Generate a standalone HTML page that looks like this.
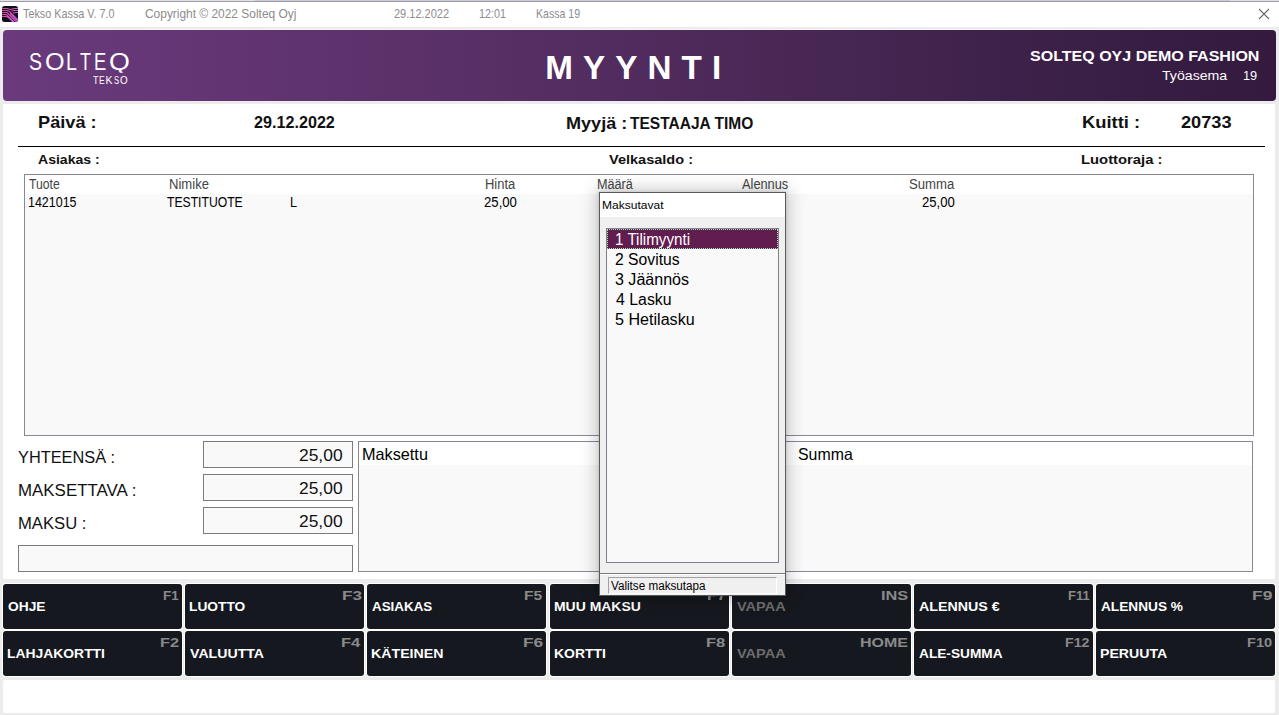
<!DOCTYPE html>
<html><head><meta charset="utf-8">
<style>
*{margin:0;padding:0;box-sizing:border-box}
html,body{width:1279px;height:715px;overflow:hidden}
body{position:relative;background:#ececec;font-family:"Liberation Sans", sans-serif}
.a{position:absolute}
.t{position:absolute;white-space:nowrap;line-height:1;transform-origin:0 0;font-family:"Liberation Sans", sans-serif}
.btn{position:absolute;background:#16181f;border-radius:3px}
.cell{position:absolute;background:#ffffff;border-radius:4px}
</style></head><body>
<!-- top strip -->
<div class="a" style="left:0;top:0;width:1279px;height:1px;background:#e2e2e2"></div><div class="a" style="left:255px;top:0;width:975px;height:1px;background:#c9ccd8"></div>
<div class="a" style="left:0;top:1px;width:1279px;height:1px;background:#9d9ea8"></div>
<!-- title bar -->
<div class="a" style="left:0;top:2px;width:1279px;height:25px;background:#ffffff"></div>
<svg class="a" style="left:2px;top:6px" width="16" height="16" viewBox="0 0 16 16">
 <defs><linearGradient id="ig" x1="0" x2="1" y1="0" y2="0"><stop offset="0" stop-color="#e2489c"/><stop offset="1" stop-color="#c95ae6"/></linearGradient>
 <clipPath id="ic"><rect x="0" y="0" width="16" height="16" rx="2.5"/></clipPath></defs>
 <g clip-path="url(#ic)">
 <rect x="0" y="0" width="16" height="16" fill="#111217"/>
 <g stroke="url(#ig)" stroke-width="1.1" fill="none">
  <path d="M0 2.5 H5 L8 3.5 L13 2.5 H16"/>
  <path d="M0 4.5 H5 L7.5 5.5 L16 14"/>
  <path d="M0 6.5 H5 L14.5 16"/>
  <path d="M0 8.5 H4.5 L12 16"/>
  <path d="M0 10.5 C3 10.5 5 10 6 11 L11 16"/>
  <path d="M9.5 5 L12 4.5 H16"/>
  <path d="M11 7 L13.5 6.5 H16"/>
  <path d="M8 7.5 L16 15.5"/>
 </g></g>
</svg>
<svg class="a" style="left:1258px;top:8px" width="12" height="12" viewBox="0 0 12 12"><path d="M1 1 L11 11 M11 1 L1 11" stroke="#6a6a6a" stroke-width="1.1"/></svg>
<!-- header -->
<div class="a" style="left:3px;top:29px;width:1273px;height:1px;background:#f6f6f6"></div>
<div class="a" style="left:3px;top:30px;width:1273px;height:71px;border-radius:4px;background:linear-gradient(90deg,#6a3a7c 0%,#5a3068 35%,#4a2856 60%,#3a1f46 85%,#331a3e 100%)"></div>
<!-- main white panel -->
<div class="a" style="left:3px;top:104px;width:1272px;height:475px;background:#ffffff;border-radius:1px"></div>
<div class="a" style="left:18px;top:146px;width:1247px;height:1px;background:#000"></div>
<!-- grid -->
<div class="a" style="left:24px;top:174px;width:1230px;height:262px;border:1px solid #858896;background:#f9f9f9"></div>
<div class="a" style="left:25px;top:175px;width:1228px;height:19px;background:#ffffff"></div>
<!-- totals boxes -->
<div class="a" style="left:203px;top:441px;width:150px;height:27px;border:1px solid #7c7c7c;background:#f9f9f9"></div>
<div class="a" style="left:203px;top:474px;width:150px;height:27px;border:1px solid #7c7c7c;background:#f9f9f9"></div>
<div class="a" style="left:203px;top:507px;width:150px;height:27px;border:1px solid #7c7c7c;background:#f9f9f9"></div>
<div class="a" style="left:18px;top:545px;width:335px;height:27px;border:1px solid #7c7c7c;background:#f9f9f9"></div>
<!-- maksettu panel -->
<div class="a" style="left:358px;top:441px;width:895px;height:131px;border:1px solid #858896;background:#f9f9f9"></div>
<div class="a" style="left:359px;top:442px;width:893px;height:23px;background:#ffffff"></div>
<!-- buttons -->
<div class="cell" style="left:2px;top:583px;width:181px;height:47px"></div>
<div class="cell" style="left:184px;top:583px;width:181px;height:47px"></div>
<div class="cell" style="left:366px;top:583px;width:181px;height:47px"></div>
<div class="cell" style="left:549px;top:583px;width:181px;height:47px"></div>
<div class="cell" style="left:731px;top:583px;width:181px;height:47px"></div>
<div class="cell" style="left:913px;top:583px;width:181px;height:47px"></div>
<div class="cell" style="left:1095px;top:583px;width:181px;height:47px"></div>
<div class="cell" style="left:2px;top:630px;width:181px;height:47px"></div>
<div class="cell" style="left:184px;top:630px;width:181px;height:47px"></div>
<div class="cell" style="left:366px;top:630px;width:181px;height:47px"></div>
<div class="cell" style="left:549px;top:630px;width:181px;height:47px"></div>
<div class="cell" style="left:731px;top:630px;width:181px;height:47px"></div>
<div class="cell" style="left:913px;top:630px;width:181px;height:47px"></div>
<div class="cell" style="left:1095px;top:630px;width:181px;height:47px"></div>
<div class="btn" style="left:3px;top:584px;width:179px;height:45px"></div>
<div class="btn" style="left:185px;top:584px;width:179px;height:45px"></div>
<div class="btn" style="left:367px;top:584px;width:179px;height:45px"></div>
<div class="btn" style="left:550px;top:584px;width:179px;height:45px"></div>
<div class="btn" style="left:732px;top:584px;width:179px;height:45px"></div>
<div class="btn" style="left:914px;top:584px;width:179px;height:45px"></div>
<div class="btn" style="left:1096px;top:584px;width:179px;height:45px"></div>
<div class="btn" style="left:3px;top:631px;width:179px;height:45px"></div>
<div class="btn" style="left:185px;top:631px;width:179px;height:45px"></div>
<div class="btn" style="left:367px;top:631px;width:179px;height:45px"></div>
<div class="btn" style="left:550px;top:631px;width:179px;height:45px"></div>
<div class="btn" style="left:732px;top:631px;width:179px;height:45px"></div>
<div class="btn" style="left:914px;top:631px;width:179px;height:45px"></div>
<div class="btn" style="left:1096px;top:631px;width:179px;height:45px"></div>
<!-- bottom panel -->
<div class="a" style="left:3px;top:680px;width:1272px;height:33px;background:#ffffff;border-radius:2px"></div>
<div class="t" style="left:23.10px;top:7.00px;font-size:13.00px;font-weight:400;color:#8c8c8c;transform:scaleX(0.8318);">Tekso Kassa V. 7.0</div>
<div class="t" style="left:144.66px;top:8.00px;font-size:12.75px;font-weight:400;color:#8c8c8c;transform:scaleX(0.9356);">Copyright © 2022 Solteq Oyj</div>
<div class="t" style="left:394.14px;top:8.00px;font-size:12.75px;font-weight:400;color:#8c8c8c;transform:scaleX(0.8629);">29.12.2022</div>
<div class="t" style="left:478.55px;top:8.00px;font-size:12.75px;font-weight:400;color:#8c8c8c;transform:scaleX(0.8467);">12:01</div>
<div class="t" style="left:535.87px;top:8.00px;font-size:12.75px;font-weight:400;color:#8c8c8c;transform:scaleX(0.8288);">Kassa 19</div>
<div class="t" style="left:29.21px;top:50.00px;font-size:24.75px;font-weight:400;color:#ffffff;transform:scaleX(0.7867);">S</div>
<div class="t" style="left:44.98px;top:50.00px;font-size:24.75px;font-weight:400;color:#ffffff;transform:scaleX(1.0176);">O</div>
<div class="t" style="left:66.22px;top:50.00px;font-size:24.75px;font-weight:400;color:#ffffff;transform:scaleX(0.7909);">L</div>
<div class="t" style="left:79.50px;top:50.00px;font-size:24.75px;font-weight:400;color:#ffffff;transform:scaleX(0.7200);">T</div>
<div class="t" style="left:94.31px;top:50.00px;font-size:24.75px;font-weight:400;color:#ffffff;transform:scaleX(0.7429);">E</div>
<div class="t" style="left:108.82px;top:50.00px;font-size:24.75px;font-weight:400;color:#ffffff;transform:scaleX(1.0824);clip-path:inset(0 0 2px 0)">Q</div>
<div class="t" style="left:93.10px;top:75.00px;font-size:10.50px;font-weight:400;color:#ffffff;transform:scaleX(0.8667);">T</div>
<div class="t" style="left:98.68px;top:75.00px;font-size:10.50px;font-weight:400;color:#ffffff;transform:scaleX(0.8167);">E</div>
<div class="t" style="left:105.40px;top:75.00px;font-size:10.50px;font-weight:400;color:#ffffff;transform:scaleX(1.0000);">K</div>
<div class="t" style="left:113.67px;top:75.00px;font-size:10.50px;font-weight:400;color:#ffffff;transform:scaleX(0.7333);">S</div>
<div class="t" style="left:119.70px;top:75.00px;font-size:10.50px;font-weight:400;color:#ffffff;transform:scaleX(0.9375);">O</div>
<div class="t" style="left:545.20px;top:51.00px;font-size:33.25px;font-weight:700;color:#ffffff;letter-spacing:10.080px">MYYNTI</div>
<div class="t" style="left:1029.96px;top:49.00px;font-size:14.00px;font-weight:700;color:#ffffff;transform:scaleX(1.1447);">SOLTEQ OYJ DEMO FASHION</div>
<div class="t" style="left:1161.90px;top:69.00px;font-size:13.25px;font-weight:400;color:#ffffff;transform:scaleX(1.0672);">Työasema</div>
<div class="t" style="left:1243.04px;top:69.00px;font-size:13.25px;font-weight:400;color:#ffffff;transform:scaleX(0.9615);">19</div>
<div class="t" style="left:37.55px;top:114.00px;font-size:17.25px;font-weight:700;color:#111111;transform:scaleX(1.0547);">Päivä :</div>
<div class="t" style="left:254.46px;top:114.00px;font-size:17.25px;font-weight:700;color:#111111;transform:scaleX(0.9365);">29.12.2022</div>
<div class="t" style="left:565.94px;top:115.00px;font-size:17.00px;font-weight:700;color:#111111;transform:scaleX(1.0636);">Myyjä :</div>
<div class="t" style="left:630.00px;top:115.00px;font-size:17.00px;font-weight:700;color:#111111;transform:scaleX(0.9127);">TESTAAJA TIMO</div>
<div class="t" style="left:1081.54px;top:114.00px;font-size:17.25px;font-weight:700;color:#111111;transform:scaleX(1.0635);">Kuitti :</div>
<div class="t" style="left:1180.85px;top:114.00px;font-size:17.25px;font-weight:700;color:#111111;transform:scaleX(1.0543);">20733</div>
<div class="t" style="left:38.00px;top:153.00px;font-size:13.00px;font-weight:700;color:#111111;transform:scaleX(1.0804);">Asiakas :</div>
<div class="t" style="left:608.50px;top:153.00px;font-size:13.00px;font-weight:700;color:#111111;transform:scaleX(1.1176);">Velkasaldo :</div>
<div class="t" style="left:1081.46px;top:153.00px;font-size:13.00px;font-weight:700;color:#111111;transform:scaleX(1.1400);">Luottoraja :</div>
<div class="t" style="left:28.90px;top:177.00px;font-size:14.00px;font-weight:400;color:#444444;transform:scaleX(0.8714);">Tuote</div>
<div class="t" style="left:168.57px;top:177.00px;font-size:14.00px;font-weight:400;color:#444444;transform:scaleX(0.9341);">Nimike</div>
<div class="t" style="left:485.47px;top:177.00px;font-size:14.00px;font-weight:400;color:#444444;transform:scaleX(0.9250);">Hinta</div>
<div class="t" style="left:597.30px;top:177.00px;font-size:14.00px;font-weight:400;color:#444444;transform:scaleX(0.9026);">Määrä</div>
<div class="t" style="left:741.70px;top:177.00px;font-size:14.00px;font-weight:400;color:#444444;transform:scaleX(0.9140);">Alennus</div>
<div class="t" style="left:908.86px;top:177.00px;font-size:14.00px;font-weight:400;color:#444444;transform:scaleX(0.9404);">Summa</div>
<div class="t" style="left:28.16px;top:195.00px;font-size:14.75px;font-weight:400;color:#000000;transform:scaleX(0.8446);">1421015</div>
<div class="t" style="left:166.70px;top:195.00px;font-size:14.75px;font-weight:400;color:#000000;transform:scaleX(0.8253);">TESTITUOTE</div>
<div class="t" style="left:290.14px;top:195.00px;font-size:14.75px;font-weight:400;color:#000000;transform:scaleX(0.8571);">L</div>
<div class="t" style="left:484.01px;top:195.00px;font-size:14.75px;font-weight:400;color:#000000;transform:scaleX(0.8917);">25,00</div>
<div class="t" style="left:921.81px;top:195.00px;font-size:14.75px;font-weight:400;color:#000000;transform:scaleX(0.8889);">25,00</div>
<div class="t" style="left:18.42px;top:450.00px;font-size:16.75px;font-weight:400;color:#111111;transform:scaleX(0.9753);">YHTEENSÄ :</div>
<div class="t" style="left:18.42px;top:482.00px;font-size:17.25px;font-weight:400;color:#111111;transform:scaleX(0.9797);">MAKSETTAVA :</div>
<div class="t" style="left:18.43px;top:515.00px;font-size:17.25px;font-weight:400;color:#111111;transform:scaleX(0.9652);">MAKSU :</div>
<div class="t" style="left:298.98px;top:447.00px;font-size:17.00px;font-weight:400;color:#111111;transform:scaleX(1.0244);">25,00</div>
<div class="t" style="left:298.98px;top:480.00px;font-size:17.00px;font-weight:400;color:#111111;transform:scaleX(1.0244);">25,00</div>
<div class="t" style="left:298.98px;top:513.00px;font-size:17.00px;font-weight:400;color:#111111;transform:scaleX(1.0244);">25,00</div>
<div class="t" style="left:362.22px;top:446.00px;font-size:16.50px;font-weight:400;color:#000000;transform:scaleX(0.9846);">Maksettu</div>
<div class="t" style="left:797.84px;top:446.00px;font-size:16.50px;font-weight:400;color:#000000;transform:scaleX(0.9625);">Summa</div>
<div class="t" style="left:8.40px;top:600.00px;font-size:13.25px;font-weight:700;color:#ffffff;transform:scaleX(1.0389);">OHJE</div>
<div class="t" style="left:162.71px;top:589.00px;font-size:13.50px;font-weight:700;color:#8a8a8a;transform:scaleX(0.9933);">F1</div>
<div class="t" style="left:189.36px;top:600.00px;font-size:13.25px;font-weight:700;color:#ffffff;transform:scaleX(1.0377);">LUOTTO</div>
<div class="t" style="left:341.53px;top:589.00px;font-size:13.50px;font-weight:700;color:#8a8a8a;transform:scaleX(1.2714);">F3</div>
<div class="t" style="left:372.40px;top:600.00px;font-size:13.25px;font-weight:700;color:#ffffff;transform:scaleX(1.0102);">ASIAKAS</div>
<div class="t" style="left:524.04px;top:589.00px;font-size:13.50px;font-weight:700;color:#8a8a8a;transform:scaleX(1.1600);">F5</div>
<div class="t" style="left:554.35px;top:600.00px;font-size:13.25px;font-weight:700;color:#ffffff;transform:scaleX(1.0531);">MUU MAKSU</div>
<div class="t" style="left:707.39px;top:589.00px;font-size:13.50px;font-weight:700;color:#8a8a8a;transform:scaleX(1.2143);">F7</div>
<div class="t" style="left:737.40px;top:600.00px;font-size:13.25px;font-weight:700;color:#6e6e6e;transform:scaleX(1.0955);">VAPAA</div>
<div class="t" style="left:880.99px;top:589.00px;font-size:13.50px;font-weight:700;color:#8a8a8a;transform:scaleX(1.2095);">INS</div>
<div class="t" style="left:919.40px;top:600.00px;font-size:13.25px;font-weight:700;color:#ffffff;transform:scaleX(1.0747);">ALENNUS €</div>
<div class="t" style="left:1068.33px;top:589.00px;font-size:13.50px;font-weight:700;color:#8a8a8a;transform:scaleX(0.9667);">F11</div>
<div class="t" style="left:1101.40px;top:600.00px;font-size:13.25px;font-weight:700;color:#ffffff;transform:scaleX(1.0304);">ALENNUS %</div>
<div class="t" style="left:1252.21px;top:589.00px;font-size:13.50px;font-weight:700;color:#8a8a8a;transform:scaleX(1.2929);">F9</div>
<div class="t" style="left:7.35px;top:647.00px;font-size:13.25px;font-weight:700;color:#ffffff;transform:scaleX(1.0478);">LAHJAKORTTI</div>
<div class="t" style="left:160.49px;top:636.00px;font-size:13.50px;font-weight:700;color:#8a8a8a;transform:scaleX(1.2071);">F2</div>
<div class="t" style="left:190.40px;top:647.00px;font-size:13.25px;font-weight:700;color:#ffffff;transform:scaleX(1.0667);">VALUUTTA</div>
<div class="t" style="left:340.97px;top:636.00px;font-size:13.50px;font-weight:700;color:#8a8a8a;transform:scaleX(1.2267);">F4</div>
<div class="t" style="left:371.33px;top:647.00px;font-size:13.25px;font-weight:700;color:#ffffff;transform:scaleX(1.0697);">KÄTEINEN</div>
<div class="t" style="left:523.31px;top:636.00px;font-size:13.50px;font-weight:700;color:#8a8a8a;transform:scaleX(1.2857);">F6</div>
<div class="t" style="left:554.35px;top:647.00px;font-size:13.25px;font-weight:700;color:#ffffff;transform:scaleX(1.0521);">KORTTI</div>
<div class="t" style="left:705.97px;top:636.00px;font-size:13.50px;font-weight:700;color:#8a8a8a;transform:scaleX(1.2267);">F8</div>
<div class="t" style="left:737.40px;top:647.00px;font-size:13.25px;font-weight:700;color:#6e6e6e;transform:scaleX(1.0955);">VAPAA</div>
<div class="t" style="left:860.22px;top:636.00px;font-size:13.50px;font-weight:700;color:#8a8a8a;transform:scaleX(1.1846);">HOME</div>
<div class="t" style="left:919.40px;top:647.00px;font-size:13.25px;font-weight:700;color:#ffffff;transform:scaleX(1.0321);">ALE-SUMMA</div>
<div class="t" style="left:1065.35px;top:636.00px;font-size:13.50px;font-weight:700;color:#8a8a8a;transform:scaleX(1.0545);">F12</div>
<div class="t" style="left:1100.33px;top:647.00px;font-size:13.25px;font-weight:700;color:#ffffff;transform:scaleX(1.0677);">PERUUTA</div>
<div class="t" style="left:1246.61px;top:636.00px;font-size:13.50px;font-weight:700;color:#8a8a8a;transform:scaleX(1.0864);">F10</div>
<!-- popup -->
<div class="a" style="left:599px;top:192px;width:187px;height:404px;background:#f0f0f0;border:1px solid #5a5a5a;box-shadow:0 0 3px 1px rgba(0,0,0,0.10),0 0 16px 3px rgba(0,0,0,0.20)"></div>
<div class="a" style="left:600px;top:193px;width:185px;height:24px;background:#ffffff"></div>
<div class="a" style="left:606px;top:228px;width:173px;height:335px;border:1px solid #7d808c;background:#f9f9f9"></div>
<div class="a" style="left:607px;top:229px;width:171px;height:20px;background:#611d4f;outline:1px dotted #a6eeb0;outline-offset:-1px"></div>
<div class="a" style="left:600px;top:573px;width:185px;height:1px;background:#7a7a7a"></div>
<div class="a" style="left:600px;top:574px;width:185px;height:1px;background:#ffffff"></div>
<div class="a" style="left:608px;top:577px;width:169px;height:17px;border-top:1px solid #a0a0a0;border-left:1px solid #a0a0a0;border-bottom:1px solid #ffffff;border-right:1px solid #ffffff;background:#f0f0f0"></div>
<div class="t" style="left:602.38px;top:199.00px;font-size:11.75px;font-weight:400;color:#000000;transform:scaleX(1.0237);">Maksutavat</div>
<div class="t" style="left:615.12px;top:231.00px;font-size:17.25px;font-weight:400;color:#ffffff;transform:scaleX(0.8795);">1 Tilimyynti</div>
<div class="t" style="left:615.09px;top:251.00px;font-size:17.25px;font-weight:400;color:#000000;transform:scaleX(0.9116);">2 Sovitus</div>
<div class="t" style="left:615.07px;top:271.00px;font-size:17.25px;font-weight:400;color:#000000;transform:scaleX(0.9295);">3 Jäännös</div>
<div class="t" style="left:616.00px;top:291.00px;font-size:17.25px;font-weight:400;color:#000000;transform:scaleX(0.9203);">4 Lasku</div>
<div class="t" style="left:615.07px;top:311.00px;font-size:17.25px;font-weight:400;color:#000000;transform:scaleX(0.9337);">5 Hetilasku</div>
<div class="t" style="left:611.10px;top:580.00px;font-size:12.50px;font-weight:400;color:#000000;transform:scaleX(0.9347);">Valitse maksutapa</div>

</body></html>
